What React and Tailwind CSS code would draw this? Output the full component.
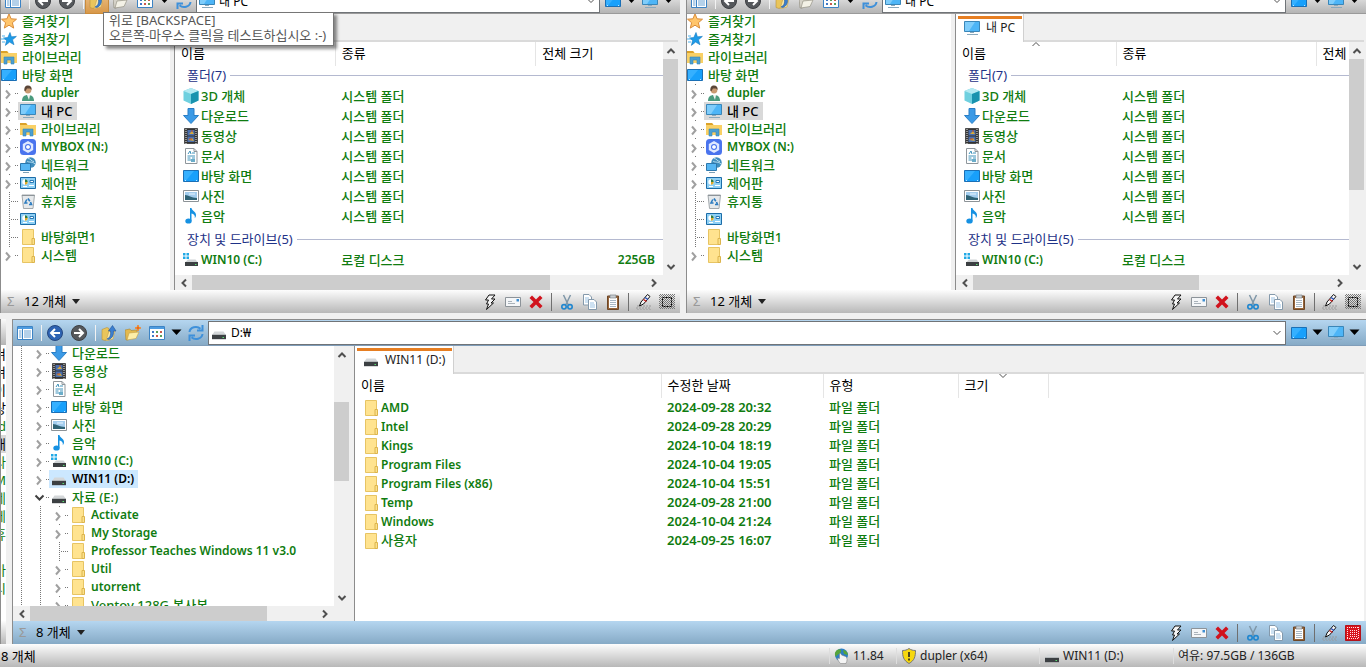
const FONT = "font-['Noto_Sans','Noto_Sans_CJK_KR',sans-serif]";

const TOP_TREE = [
  { icon: "star", label: "즐겨찾기", root: true },
  { icon: "bluestar", label: "즐겨찾기", root: true },
  { icon: "library", label: "라이브러리", root: true },
  { icon: "desktop", label: "바탕 화면", root: true },
  { icon: "user", label: "dupler", node: "closed" },
  { icon: "pc", label: "내 PC", node: "closed", selected: true },
  { icon: "library", label: "라이브러리", node: "closed" },
  { icon: "mybox", label: "MYBOX (N:)", node: "closed" },
  { icon: "network", label: "네트워크", node: "closed" },
  { icon: "control", label: "제어판", node: "closed" },
  { icon: "bin", label: "휴지통", node: "leaf" },
  { icon: "control", label: "", node: "leaf" },
  { icon: "folder", label: "바탕화면1", node: "leaf" },
  { icon: "folder", label: "시스템", node: "closed" },
];

const BOTTOM_TREE = [
  { icon: "download", label: "다운로드", node: "closed", depth: 1 },
  { icon: "video", label: "동영상", node: "closed", depth: 1 },
  { icon: "doc", label: "문서", node: "closed", depth: 1 },
  { icon: "desktop", label: "바탕 화면", node: "closed", depth: 1 },
  { icon: "photo", label: "사진", node: "closed", depth: 1 },
  { icon: "music", label: "음악", node: "closed", depth: 1 },
  { icon: "windrive", label: "WIN10 (C:)", node: "closed", depth: 1 },
  { icon: "drive", label: "WIN11 (D:)", node: "closed", depth: 1, selected: true },
  { icon: "drive", label: "자료 (E:)", node: "open", depth: 1 },
  { icon: "folder", label: "Activate", node: "closed", depth: 2 },
  { icon: "folder", label: "My Storage", node: "closed", depth: 2 },
  { icon: "folder", label: "Professor Teaches Windows 11 v3.0", node: "leaf", depth: 2 },
  { icon: "folder", label: "Util", node: "closed", depth: 2 },
  { icon: "folder", label: "utorrent", node: "closed", depth: 2 },
  { icon: "folder", label: "Ventoy 128G 복사본", node: "closed", depth: 2 },
];

const PC_GROUPS = [
  {
    title: "폴더(7)",
    rows: [
      { icon: "cube", name: "3D 개체", kind: "시스템 폴더" },
      { icon: "download", name: "다운로드", kind: "시스템 폴더" },
      { icon: "video", name: "동영상", kind: "시스템 폴더" },
      { icon: "doc", name: "문서", kind: "시스템 폴더" },
      { icon: "desktop", name: "바탕 화면", kind: "시스템 폴더" },
      { icon: "photo", name: "사진", kind: "시스템 폴더" },
      { icon: "music", name: "음악", kind: "시스템 폴더" },
    ],
  },
  {
    title: "장치 및 드라이브(5)",
    rows: [{ icon: "windrive", name: "WIN10 (C:)", kind: "로컬 디스크", size: "225GB" }],
  },
];

const D_ROWS = [
  { name: "AMD", date: "2024-09-28 20:32" },
  { name: "Intel", date: "2024-09-28 20:29" },
  { name: "Kings", date: "2024-10-04 18:19" },
  { name: "Program Files", date: "2024-10-04 19:05" },
  { name: "Program Files (x86)", date: "2024-10-04 15:51" },
  { name: "Temp", date: "2024-09-28 21:00" },
  { name: "Windows", date: "2024-10-04 21:24" },
  { name: "사용자", date: "2024-09-25 16:07" },
];

// slice of the window that sits behind the lower pane
const SLIVER = ["겨", "겨", "이", "탕", "d", "내", "라", "M", "네", "제", "휴", "", "바", "시"];

const ART = {
  star: (
    <path d="M8 .8l2.100 5 5.400.4-4.100 3.500 1.300 5.400L8 12.200l-4.700 2.900 1.300-5.400L.5 6.200l5.400-.4z" fill="#ffc56b" stroke="#d98c3a" />
  ),
  bluestar: (
    <>
      <path d="M9 1.500l1.400 4.300 5-.4-3.900 3.400 1.500 4.900-4.400-2.600-4.200 3.300 1.200-5L2.500 7l4.300-.5z" fill="#1e9be8" stroke="#1479c0" strokeWidth=".6" />
      <path d="M1 5h3M0 8h4M1 11h3" stroke="#4fb3ee" />
    </>
  ),
  library: (
    <>
      <path d="M0 2h6l1.500 2H16v10H0z" fill="#f9d065" />
      <path d="M0 2h6l1.500 2H0z" fill="#dba22a" />
      <path d="M3 15V8h10v7h-3v-4H6v4z" fill="#4b9fd0" stroke="#3787bb" strokeWidth=".6" />
    </>
  ),
  desktop: (
    <>
      <path d="M.5 2.500h15v11H.5z" fill="#18a0fb" stroke="#1a6fb5" />
      <path d="M1 3h10L3 12.500H1z" fill="#35b0ff" />
      <path d="M2 12.500h1M13 12.500h2" stroke="#bfe5ff" strokeDasharray="1 1" />
    </>
  ),
  user: (
    <>
      <path d="M2 16c0-4 2-6 6-6s6 2 6 6z" fill="#4b9b7e" />
      <path d="M7 10h3l-1 5z" fill="#f4f4f4" />
      <circle cx="8" cy="5" r="3.400" fill="#c99a72" />
      <path d="M4.500 6C4 2 5.500.5 8 .5S12 2 11.500 5L10 3.500H7L5.500 6z" fill="#5b4638" />
    </>
  ),
  pc: (
    <>
      <path d="M.5 1.500h15v10H.5z" fill="#4db5f7" stroke="#3a86b8" />
      <path d="M1 2h10L5 11H1z" fill="#7fcdfb" />
      <path d="M6 12.500h4M3 14.500h11" stroke="#8aa9bd" />
    </>
  ),
  mybox: (
    <>
      <rect width="16" height="16" rx="3.500" fill="#4a74ee" />
      <path d="M8 2l5.200 3v6L8 14l-5.200-3V5z" fill="#dfe9ff" />
      <circle cx="8" cy="8" r="3" fill="#4a74ee" />
      <path d="M8 6l1.800 1v2L8 10 6.200 9V7z" fill="#fff" />
    </>
  ),
  network: (
    <>
      <circle cx="10.500" cy="5.500" r="5.200" fill="#3f8dbd" />
      <path d="M8 1.500c3 0 3 3 6 3M7 4c2 2 5 0 8 3" stroke="#b9def0" fill="none" />
      <path d="M.5 6.500h10v7H.5z" fill="#56b6f3" stroke="#2d78ad" />
      <path d="M3 15.500h6" stroke="#7da0b5" />
    </>
  ),
  control: (
    <>
      <path d="M.5 2.500h15v11H.5z" fill="#8fd0f5" stroke="#1c6da8" />
      <circle cx="5" cy="7" r="2.700" fill="#fff" />
      <path d="M5 7V4.300A2.700 2.700 0 0 1 7.700 7z" fill="#2f7d45" />
      <path d="M5 7h2.700A2.700 2.700 0 0 1 5 9.700z" fill="#e0a828" />
      <path d="M10 5.500h3.500v2H10z" fill="#fff" stroke="#2878b5" />
      <path d="M3 11.500h4M9 10.500h5" stroke="#fff" />
    </>
  ),
  bin: (
    <>
      <path d="M2 2h12.500L13 15.500H3.500z" fill="#e6e9eb" stroke="#a2a8ac" />
      <path d="M2 2.500h12.500" stroke="#8d9499" />
      <path d="M8 5.500l1.800 2.800M6.800 6.500L5 10h2.500M9 11.500h2.500l-1-2.500" stroke="#2c7cc0" strokeWidth="1.600" fill="none" />
    </>
  ),
  folder: (
    <>
      <path d="M2.500.500H13.500v15H2.500z" fill="#ffe38f" stroke="#e7c463" />
      <path d="M12 9.500h2.500v6H12z" fill="#fbe08a" stroke="#dcb44c" />
    </>
  ),
  cube: (
    <>
      <path d="M8 0l7.500 3v9.500L8 16 .5 12.500V3z" fill="#6fd0df" />
      <path d="M8 0l7.500 3L8 6 .5 3z" fill="#b4eaf2" />
      <path d="M8 6l7.500-3v9.500L8 16z" fill="#1a93ae" />
    </>
  ),
  download: <path d="M5 .5h6v7h4.500L8 15.500.5 7.500H5z" fill="#3b9ae6" stroke="#2b7fc6" />,
  video: (
    <>
      <path d="M1.500.500h13v15h-13z" fill="#343434" stroke="#4c4c4c" />
      <path d="M3 1v15M13 1v15" stroke="#eee" strokeDasharray="1 1" />
      <path d="M4.500 2h7v5.500h-7zM4.500 8.500h7V14h-7z" fill="#4a6fae" />
      <path d="M6 6l3-3 2 3zM5 12l4-2 2 3z" fill="#d6a93d" />
      <path d="M8 3h2M6 11h3" stroke="#b8482f" />
    </>
  ),
  doc: (
    <>
      <path d="M2.500.500H11L14 3.500v12H2.500z" fill="#fff" stroke="#8f969b" />
      <path d="M11 .5v3h3" fill="none" stroke="#8f969b" />
      <path d="M5 6l2-3 1 3M9 5h3M4.500 8h7.500M4.500 10h3M9 10h3M4.500 12h7.500" stroke="#3f92ba" fill="none" />
      <path d="M8 11h4v3H8z" fill="#6badc9" />
    </>
  ),
  photo: (
    <>
      <path d="M.5 2.500h15v11H.5z" fill="#fff" stroke="#8d9397" />
      <path d="M2 4h12v8H2z" fill="#a3cdee" />
      <path d="M2 7c4 0 6 3 12 3v2H2z" fill="#2f6376" />
      <path d="M6 6h6" stroke="#e9f5ff" />
    </>
  ),
  music: (
    <>
      <path d="M7 0h1.500c.3 3 4.500 3.500 4.500 7 0 1.500-.6 2.500-1.200 3.200.5-3-1-4-3.300-4.700v7.300H7z" fill="#1691e2" />
      <ellipse cx="5.500" cy="13" rx="3.200" ry="2.600" fill="#1691e2" />
    </>
  ),
  drive: (
    <>
      <path d="M3.500 6.500h9l2.500 3.500H1z" fill="#d4d7d9" />
      <path d="M1 9.800h14v4.400H1z" fill="#3c4043" />
      <path d="M11.500 12.500h1.500" stroke="#58e070" />
    </>
  ),
  windrive: (
    <>
      <path d="M0 1h2.500v2.500H0zM3.500 1H6v2.500H3.500zM0 4.500h2.500V7H0zM3.500 4.500H6V7H3.500z" fill="#21a9e6" />
      <path d="M5 7.500h7.500L15 10.500H2z" fill="#cfd3d5" />
      <path d="M2 10h13v4H2z" fill="#3c4043" />
      <path d="M12 12.500h1.500" stroke="#58e070" />
    </>
  ),
  panel: (
    <>
      <path d="M.5 1.500h15v13H.5z" fill="#fff" stroke="#3c83c4" />
      <path d="M1 2h14v2H1z" fill="#4d9be0" />
      <path d="M5.500 4v10" stroke="#3c83c4" />
      <path d="M2 6h2.500M2 8h2.500M2 10h2.500M2 12h2.500M7 6h7M7 8h7M7 10h7M7 12h7" stroke="#6aa3d4" />
    </>
  ),
  back: (
    <>
      <circle cx="8" cy="8" r="7.500" fill="#2d63b3" stroke="#24477f" />
      <path d="M13 8H4M8 4L4 8l4 4" fill="none" stroke="#fff" strokeWidth="2" />
    </>
  ),
  backoff: (
    <>
      <circle cx="8" cy="8" r="7.500" fill="#55585c" stroke="#3d3f43" />
      <path d="M13 8H4M8 4L4 8l4 4" fill="none" stroke="#fff" strokeWidth="2" />
    </>
  ),
  forward: (
    <>
      <circle cx="8" cy="8" r="7.500" fill="#55585c" stroke="#3d3f43" />
      <path d="M3 8h9M8 4l4 4-4 4" fill="none" stroke="#fff" strokeWidth="2" />
    </>
  ),
  up: (
    <>
      <path d="M1 4.500l5-2 2 1v10l-4 2-3-1z" fill="#e9c55b" stroke="#b8923a" strokeWidth=".6" />
      <path d="M8 6l6 0-2 8-7 2z" fill="#fbe9a5" stroke="#c4a04a" strokeWidth=".6" />
      <path d="M6 14c3-1 4-4 3.500-8H7.500L11.500.5 15 6h-2.500c.4 4-1 7-4.500 8.500z" fill="#3b7fd0" stroke="#1f5497" strokeWidth=".6" />
    </>
  ),
  newfolder: (
    <>
      <path d="M0 5l5-1 1 1.500 6-.5v4L3 15H1z" fill="#e3b94e" stroke="#ab8631" strokeWidth=".6" />
      <path d="M4 8l10-1-3 6.500L2 15z" fill="#fdeea9" stroke="#c4a04a" strokeWidth=".6" />
      <path d="M13 0l.8 2.200L16 3l-2.200.8L13 6l-.8-2.200L10 3l2.200-.8z" fill="#e8590c" stroke="#f08c34" />
    </>
  ),
  newfolderoff: (
    <>
      <path d="M0 5l5-1 1 1.500 6-.5v4L3 15H1z" fill="#d5d2c8" stroke="#8a8778" strokeWidth=".6" />
      <path d="M4 8l10-1-3 6.500L2 15z" fill="#f3f1e6" stroke="#8a8778" strokeWidth=".6" />
    </>
  ),
  views: (
    <>
      <path d="M.5 1.500h15v13H.5z" fill="#fff" stroke="#3c83c4" />
      <path d="M1 2h14v2H1z" fill="#4d9be0" />
      <path d="M3 6h2v2H3zM3 10h2v2H3z" fill="#3f78c7" />
      <path d="M7 6h2v2H7zM11 10h2v2h-2z" fill="#58a05a" />
      <path d="M11 6h2v2h-2zM7 10h2v2H7z" fill="#cc5a4a" />
    </>
  ),
  refresh: (
    <path
      d="M1.500 7c.5-5 7.500-6.500 11-3.200M14.500 0v5.500H9M14.500 9c-.5 5-7.500 6.500-11 3.200M1.500 16v-5.500H7"
      fill="none"
      stroke="#3e90da"
      strokeWidth="2"
    />
  ),
  bolt: <path d="M7 1h6L9.500 5H13l-4 4h2.500L4.500 15.500 6.500 10H4.500l2-4H3.500z" fill="#f4f4f4" stroke="#111" />,
  mail: (
    <>
      <path d="M.5 3.500h15v9H.5z" fill="#f4f6f8" stroke="#8c9399" />
      <path d="M3 7.500h4M3 9.500h7" stroke="#a9b2ba" />
      <path d="M11.500 5h2.500v2.500h-2.500z" fill="#3f8fd2" />
    </>
  ),
  remove: <path d="M1.500 4L4 1.500l4 4 4-4L14.500 4l-4 4 4 4-2.500 2.500-4-4-4 4L1.500 12l4-4z" fill="#d1121c" />,
  cut: (
    <>
      <path d="M4.500 1l4.800 10M11.500 1L6.700 11" stroke="#7f97a8" strokeWidth="1.500" />
      <circle cx="5" cy="12.800" r="2.200" fill="none" stroke="#1f86cf" strokeWidth="1.600" />
      <circle cx="11" cy="12.800" r="2.200" fill="none" stroke="#1f86cf" strokeWidth="1.600" />
    </>
  ),
  copy: (
    <>
      <path d="M1.500.500H7L9.500 3v8h-8z" fill="#fff" stroke="#8499ab" />
      <path d="M6.500 5.500H12L14.500 8v7.500h-8z" fill="#fff" stroke="#8499ab" />
      <path d="M3 4h4M3 6h3M3 8h3M8 9h4M8 11h5M8 13h5" stroke="#9cc3e4" />
    </>
  ),
  paste: (
    <>
      <path d="M2.500 2h11v13.500h-11z" fill="#96643a" stroke="#6e4726" />
      <path d="M4 4h8v10H4z" fill="#fff" />
      <path d="M5 1h6v3H5z" fill="#c8cdd1" stroke="#70777c" strokeWidth=".6" />
      <path d="M5 6.500h6M5 8.500h6M5 10.500h6M5 12.500h6" stroke="#a9b8c4" />
    </>
  ),
  pen: (
    <>
      <path d="M1 12h15M0 14h15M1 16h15" stroke="#9a9a9a" strokeDasharray="2 1" />
      <path d="M3.500 12l1.500-4 6.500-7.500L14 2.500 7.500 10z" fill="#f7f7f7" stroke="#111" />
      <path d="M7.500 5.500l3 2" stroke="#c22" strokeWidth="1.500" />
      <path d="M9 3.500l3 2" stroke="#2a4fb8" strokeWidth="1.500" />
    </>
  ),
  grid: (
    <>
      <path
        d="M0 1.500h16M0 3.500h16M0 5.500h16M0 7.500h16M0 9.500h16M0 11.500h16M0 13.500h16M1 .5h15M1 2.500h15M1 4.500h15M1 6.500h15M1 8.500h15M1 10.500h15M1 12.500h15M1 14.500h15"
        stroke="#777"
        strokeDasharray="1 1"
      />
      <path d="M3.500 3.500h9v9h-9z" fill="none" stroke="#000" strokeDasharray="2 1" />
    </>
  ),
  gridon: (
    <>
      <path d="M.5.500h15v15H.5z" fill="#d8141c" stroke="#b3121a" />
      <path
        d="M2 2.500h12M2 13.500h12M2.500 2v12M13.500 2v12M5 5.500h7M5 7.500h7M5 9.500h7M5 11.500h7"
        stroke="#ffe5e5"
        strokeDasharray="1 1"
      />
    </>
  ),
  globe: (
    <>
      <circle cx="7.500" cy="7" r="6.500" fill="#2b7ec4" />
      <path d="M3 2c3-2 5 0 4 2S3 6 2 9C0 6 1 4 3 2zM9 2c3 0 5 3 5 5l-4-1z" fill="#57a43b" />
      <path d="M5.500 6c1-1 2 0 2 1l4 1.500c2 1 2 4 .5 7H6.500c-2-2-3-4-3-5.500l2 .5z" fill="#f4f4f4" stroke="#777" strokeWidth=".5" />
    </>
  ),
  shield: (
    <>
      <path d="M8 .5c2 1.500 4 2 6.500 2 0 6-1 10-6.500 13C2.500 12.500 1.500 8.500 1.500 2.500 4 2.500 6 2 8 .5z" fill="#f7d80e" stroke="#777" />
      <path d="M8 4v5M8 10.500v2" stroke="#222" strokeWidth="1.600" />
    </>
  ),
};

// names without any hangul are set a size smaller and a step bolder
function nameFace(text) {
  return /[가-힣]/.test(text) ? "text-[13px] font-medium" : "text-[12px] font-semibold";
}

function Icon({ name }) {
  return (
    <svg viewBox="0 0 16 16" className="h-4 w-4 shrink-0" aria-hidden="true">
      {ART[name]}
    </svg>
  );
}

function Caret() {
  return (
    <svg viewBox="0 0 11 7" className="h-[7px] w-[11px] shrink-0" aria-hidden="true">
      <path d="M.5.500h10L5.500 6z" fill="#000" />
    </svg>
  );
}

const CHEVRONS = {
  up: "M1.500 7L5 3.500 8.500 7",
  down: "M1.500 3L5 6.500 8.500 3",
  left: "M7 1.500L3.500 5 7 8.500",
  right: "M3 1.500L6.500 5 3 8.500",
};

function Chevron({ dir, thin }) {
  return (
    <svg viewBox="0 0 10 10" className="h-[10px] w-[10px] shrink-0" aria-hidden="true">
      <path d={CHEVRONS[dir]} fill="none" stroke="#505050" strokeWidth={thin ? 1 : 2} />
    </svg>
  );
}

/* ---------- toolbar ---------- */

function ToolButton({ icon, label, hot }) {
  return (
    <button
      type="button"
      aria-label={label}
      className={
        hot
          ? "flex h-[26px] w-6 items-center justify-center border border-[#c98b3c] bg-gradient-to-b from-[#f0c890] to-[#d89848]"
          : "flex h-[26px] w-6 items-center justify-center"
      }
    >
      <Icon name={icon} />
    </button>
  );
}

function Divider() {
  return <span className="ml-1 mr-px h-4 w-px shrink-0 bg-[#f2f2f2]" />;
}

function Toolbar({ icon, path, active, hot }) {
  return (
    <div
      className={
        active
          ? "flex h-[26px] shrink-0 items-center border-b border-[#7f9db9] bg-gradient-to-b from-[#b5d6f0] to-[#86aac6]"
          : "flex h-[26px] shrink-0 items-center border-b border-[#9a9a9a] bg-gradient-to-b from-[#fafafa] to-[#b4b4b4]"
      }
    >
      <div className="flex w-[195px] shrink-0 items-center">
        <ToolButton icon="panel" label="트리" />
        <Divider />
        <ToolButton icon={active ? "back" : "backoff"} label="뒤로" />
        <ToolButton icon="forward" label="앞으로" />
        <Divider />
        <ToolButton icon="up" label="위로" hot={hot} />
        <ToolButton icon={active ? "newfolder" : "newfolderoff"} label="새 폴더" />
        <ToolButton icon="views" label="보기" />
        <button type="button" aria-label="보기 선택" className="flex h-[26px] flex-1 items-center justify-center">
          <Caret />
        </button>
        <ToolButton icon="refresh" label="새로 고침" />
      </div>
      <div className="flex h-6 min-w-0 flex-1 items-center border border-[#707478] bg-white pl-[2px] pr-[3px]">
        <Icon name={icon} />
        <input
          aria-label="주소"
          defaultValue={path}
          className="h-5 min-w-0 flex-1 bg-transparent pl-1 text-[12px] text-black outline-none"
        />
        <button type="button" aria-label="주소 목록">
          <Chevron dir="down" thin />
        </button>
      </div>
      <div className="flex shrink-0 items-center gap-[5px] pl-[5px] pr-[6px]">
        <button type="button" aria-label="바탕 화면">
          <Icon name="desktop" />
        </button>
        <button type="button" aria-label="바탕 화면 목록">
          <Caret />
        </button>
        <button type="button" aria-label="내 PC">
          <Icon name="pc" />
        </button>
        <button type="button" aria-label="내 PC 목록">
          <Caret />
        </button>
      </div>
    </div>
  );
}

/* ---------- tree ---------- */

function Guide() {
  return (
    <svg viewBox="0 0 19 18" className="h-[18px] w-[19px] shrink-0" aria-hidden="true">
      <path d="M8.500 0v18" stroke="#777" strokeDasharray="1 1" />
    </svg>
  );
}

function Node({ state }) {
  return (
    <svg viewBox="0 0 17 18" className="h-[18px] w-[17px] shrink-0" aria-hidden="true">
      {state === "leaf" ? (
        <path d="M8.500 0v18M10 9.500h7" stroke="#777" strokeDasharray="1 1" />
      ) : (
        <path d="M8.500 0v1M14 9.500h3" stroke="#777" strokeDasharray="1 1" />
      )}
      {state === "closed" && <path d="M5 6.500l3.500 4-3.500 4" fill="none" stroke="#a0a0a0" strokeWidth="2" />}
      {state === "open" && <path d="M3.500 7.500l4 4 4-4" fill="none" stroke="#404040" strokeWidth="2" />}
    </svg>
  );
}

function TreeRow({ item, active }) {
  const tone = item.selected ? "text-black" : "text-[#107c10]";
  const fill = item.selected ? (active ? "bg-[#cce8ff]" : "bg-[#d9d9d9]") : "";
  return (
    <li className="flex h-[18px] items-center whitespace-nowrap">
      {Array.from({ length: item.depth || 0 }, (_, i) => (
        <Guide key={i} />
      ))}
      {!item.root && <Node state={item.node} />}
      <span
        className={`flex h-[18px] items-center gap-[5px] pr-1 leading-[18px] ${nameFace(item.label)} ${tone} ${fill} ${
          item.root ? "" : "pl-[2px]"
        }`}
      >
        <Icon name={item.icon} />
        {item.label}
      </span>
    </li>
  );
}

function Tree({ items, active }) {
  return (
    <div className="min-h-0 min-w-0 flex-1 overflow-hidden bg-white">
      <ul className="-mt-[2px]">
        {items.map((item, i) => (
          <TreeRow key={i} item={item} active={active} />
        ))}
      </ul>
    </div>
  );
}

/* ---------- scroll bars ---------- */

function VScroll({ thumb }) {
  return (
    <div className="flex w-[15px] shrink-0 flex-col items-center bg-[#f0f0f0]">
      <span className="flex h-[17px] items-center">
        <Chevron dir="up" />
      </span>
      <div className="min-h-0 w-full flex-1">
        <div className={`w-full bg-[#cdcdcd] ${thumb}`} />
      </div>
      <span className="flex h-[17px] items-center">
        <Chevron dir="down" />
      </span>
    </div>
  );
}

function HScroll({ thumb }) {
  return (
    <div className="flex h-[15px] shrink-0 items-center bg-[#f0f0f0] pr-4">
      <span className="flex w-[17px] justify-center">
        <Chevron dir="left" />
      </span>
      <div className="h-full flex-1">
        <div className={`h-full bg-[#cdcdcd] ${thumb}`} />
      </div>
      <span className="flex w-[17px] justify-center">
        <Chevron dir="right" />
      </span>
    </div>
  );
}

/* ---------- lists ---------- */

function TabStrip({ icon, label }) {
  return (
    <div className="flex h-7 shrink-0 border-b-2 border-[#dadada] bg-[#f0f0f0]">
      <button type="button" className="-mb-[2px] flex flex-col border-r border-[#d0d0d0] bg-white pl-[2px] pr-px pt-[2px]">
        <span className="h-[3px] w-full bg-[#e67e22]" />
        <span className="flex flex-1 items-center gap-[6px] pb-[6px] pl-[6px] pr-[7px] text-[12px] leading-4 text-[#222]">
          <Icon name={icon} />
          {label}
        </span>
      </button>
    </div>
  );
}

function HeadCell({ children, last, sorted }) {
  return (
    <th
      scope="col"
      className={
        last
          ? "relative h-6 overflow-hidden whitespace-nowrap pb-[2px] pl-[6px] text-left font-normal"
          : "relative h-6 overflow-hidden whitespace-nowrap border-r border-[#e5e5e5] pb-[2px] pl-[6px] text-left font-normal"
      }
    >
      {children}
      {sorted && (
        <span className="absolute inset-x-0 top-0 flex h-1 items-center justify-center">
          <Chevron dir={sorted} thin />
        </span>
      )}
    </th>
  );
}

function PcList({ sorted }) {
  return (
    <div className="min-w-0 flex-1 overflow-hidden bg-white pb-[5px]">
      <table className="w-0 min-w-full table-fixed border-collapse text-[13px] leading-5">
        <colgroup>
          <col className="w-[160px]" />
          <col className="w-[200px]" />
          <col className="w-[127px]" />
        </colgroup>
        <thead className="text-black">
          <tr>
            <HeadCell sorted={sorted}>이름</HeadCell>
            <HeadCell>종류</HeadCell>
            <HeadCell last>전체 크기</HeadCell>
          </tr>
        </thead>
        {PC_GROUPS.map((g, gi) => (
          <tbody key={g.title} className="font-medium text-[#107c10]">
            <tr>
              <th
                colSpan={3}
                scope="rowgroup"
                className={gi ? "h-6 pl-3 pt-[2px] font-normal" : "h-5 pb-[2px] pl-3 font-normal"}
              >
                <div className="flex items-center gap-1 leading-4 text-[#1e3287]">
                  {g.title}
                  <span className="h-px flex-1 bg-[#b4b9d0]" />
                </div>
              </th>
            </tr>
            {g.rows.map((r) => (
              <tr key={r.name}>
                <td className="h-5 pl-2">
                  <div className={`flex items-center gap-[2px] whitespace-nowrap leading-5 ${nameFace(r.name)}`}>
                    <Icon name={r.icon} />
                    {r.name}
                  </div>
                </td>
                <td className="h-5 whitespace-nowrap pl-[6px]">{r.kind}</td>
                <td className="h-5 whitespace-nowrap pr-2 text-right text-[12px] font-semibold leading-5">{r.size}</td>
              </tr>
            ))}
          </tbody>
        ))}
      </table>
    </div>
  );
}

function DriveList() {
  return (
    <div className="min-h-0 flex-1 overflow-hidden bg-white">
      <table className="table-fixed border-collapse text-[13px] leading-[19px]">
        <colgroup>
          <col className="w-[306px]" />
          <col className="w-[162px]" />
          <col className="w-[135px]" />
          <col className="w-[90px]" />
        </colgroup>
        <thead className="text-black">
          <tr>
            <HeadCell>이름</HeadCell>
            <HeadCell>수정한 날짜</HeadCell>
            <HeadCell>유형</HeadCell>
            <HeadCell sorted="down">크기</HeadCell>
          </tr>
        </thead>
        <tbody className="text-[#107c10]">
          {D_ROWS.map((r) => (
            <tr key={r.name}>
              <td className="h-[19px] pl-2">
                <div className={`flex items-center gap-[2px] whitespace-nowrap leading-[19px] ${nameFace(r.name)}`}>
                  <Icon name="folder" />
                  {r.name}
                </div>
              </td>
              <td className="h-[19px] whitespace-nowrap pl-[6px] font-semibold">{r.date}</td>
              <td className="h-[19px] whitespace-nowrap pl-[6px] font-medium">파일 폴더</td>
              <td />
            </tr>
          ))}
        </tbody>
      </table>
    </div>
  );
}

/* ---------- bars at the foot of each pane ---------- */

const ACTIONS = [
  ["bolt", "실행"],
  ["mail", "메일"],
  ["remove", "삭제"],
  null,
  ["cut", "잘라내기"],
  ["copy", "복사"],
  ["paste", "붙여넣기"],
  null,
  ["pen", "이름 바꾸기"],
];

function PaneStatus({ count, active }) {
  return (
    <div
      className={
        active
          ? "flex h-[23px] shrink-0 items-center justify-between bg-gradient-to-b from-[#b5d6f0] to-[#86aac6] pr-[5px]"
          : "flex h-[23px] shrink-0 items-center justify-between bg-gradient-to-b from-[#fdfdfd] to-[#b8b8b8] pr-[5px]"
      }
    >
      <button type="button" className="flex items-center pb-px pl-[6px] text-[13px] leading-4 text-black">
        <span className="w-[17px] text-left text-[#999]">Σ</span>
        {count}
        <svg viewBox="0 0 8 5" className="ml-[6px] h-[5px] w-2" aria-hidden="true">
          <path d="M0 0h8L4 5z" fill="#222" />
        </svg>
      </button>
      <div className="flex items-center gap-[7px]">
        {ACTIONS.map((a, i) =>
          a ? (
            <button key={i} type="button" aria-label={a[1]}>
              <Icon name={a[0]} />
            </button>
          ) : (
            <span key={i} className="h-[18px] w-px bg-[#6f6f6f]" />
          )
        )}
        <button type="button" aria-label="선택">
          <Icon name={active ? "gridon" : "grid"} />
        </button>
      </div>
    </div>
  );
}

function PcPane({ treeCol, hThumb, sorted, hot }) {
  return (
    <section className="relative flex min-w-0 flex-1 flex-col border-l border-[#8c8c8c]">
      <div className="flex h-[14px] flex-col justify-end overflow-hidden">
        <Toolbar icon="pc" path="내 PC" hot={hot} />
      </div>
      <div className="flex flex-1 bg-[#f0f0f0] pr-[2px]">
        <div className={`flex shrink-0 flex-col bg-white ${treeCol}`}>
          <Tree items={TOP_TREE} />
        </div>
        <div className="ml-1 flex min-w-0 flex-1 flex-col border-l border-[#8c8c8c]">
          <TabStrip icon="pc" label="내 PC" />
          <div className="flex flex-1">
            <PcList sorted={sorted} />
            <VScroll thumb="h-[66%]" />
          </div>
          <HScroll thumb={hThumb} />
        </div>
      </div>
      <PaneStatus count="12 개체" />
      {hot && (
        <div
          role="tooltip"
          className="absolute left-[102px] top-3 whitespace-nowrap border border-[#767676] bg-white pb-[2px] pl-[5px] pr-[7px] text-[13px] leading-[15px] text-[#575757] shadow-[3px_3px_3px_rgba(0,0,0,0.45)]"
        >
          위로 [BACKSPACE]
          <br />
          오른쪽-마우스 클릭을 테스트하십시오 :-)
        </div>
      )}
    </section>
  );
}

function DrivePane() {
  return (
    <section className="flex min-w-0 flex-1 flex-col border-l border-t border-[#8c8c8c]">
      <Toolbar icon="drive" path="D:₩" active />
      <div className="flex min-h-0 flex-1 bg-[#f0f0f0] pr-[2px]">
        <div className="flex w-[336px] shrink-0 flex-col bg-white">
          <div className="flex min-h-0 flex-1">
            <Tree items={BOTTOM_TREE} active />
            <VScroll thumb="mt-[39px] h-[79px]" />
          </div>
          <HScroll thumb="w-[83%]" />
        </div>
        <div className="ml-[5px] flex min-w-0 flex-1 flex-col border-l border-[#8c8c8c]">
          <TabStrip icon="drive" label="WIN11 (D:)" />
          <DriveList />
        </div>
      </div>
      <PaneStatus count="8 개체" active />
    </section>
  );
}

function BackWindow() {
  return (
    <div className="flex w-[6px] shrink-0 flex-col overflow-hidden border-l border-[#8c8c8c] bg-white">
      <div className="h-[26px] shrink-0 bg-gradient-to-b from-[#fafafa] to-[#b4b4b4]" />
      <div className="flex min-h-0 flex-1 flex-col overflow-hidden text-[13px] leading-[18px] text-[#107c10]">
        {SLIVER.map((s, i) => (
          <span
            key={i}
            className={
              i === 5
                ? "flex h-[18px] shrink-0 justify-end bg-[#d9d9d9] text-black"
                : i < 4
                  ? "flex h-[18px] shrink-0 justify-end text-black"
                  : "flex h-[18px] shrink-0 justify-end"
            }
          >
            {s}
          </span>
        ))}
      </div>
      <div className="h-[23px] shrink-0 bg-gradient-to-b from-[#fdfdfd] to-[#b8b8b8]" />
    </div>
  );
}

function StatusBar() {
  return (
    <footer className="flex h-[23px] shrink-0 items-center bg-gradient-to-b from-[#fdfdfd] to-[#b8b8b8] text-[12px] leading-4 text-[#222]">
      <span className="flex-1 pl-px text-[13px] text-black">8 개체</span>
      <span className="flex w-[67px] items-center gap-[3px] border-l border-[#ddd] pl-1">
        <Icon name="globe" />
        11.84
      </span>
      <span className="flex w-[143px] items-center gap-[3px] border-l border-[#ddd] pl-1">
        <Icon name="shield" />
        dupler (x64)
      </span>
      <span className="flex w-[134px] items-center gap-[3px] border-l border-[#ddd] pl-1">
        <Icon name="drive" />
        WIN11 (D:)
      </span>
      <span className="w-[193px] border-l border-[#ddd] pl-1">여유: 97.5GB / 136GB</span>
    </footer>
  );
}

export default function App() {
  return (
    <div className={`flex h-screen flex-col overflow-hidden bg-[#f0f0f0] ${FONT}`}>
      <div className="flex shrink-0 gap-[6px]">
        <PcPane treeCol="w-[169px]" hThumb="w-[79%]" hot />
        <PcPane treeCol="w-[264px]" hThumb="w-[63%]" sorted="up" />
      </div>
      <div className="mt-[6px] flex min-h-0 flex-1 gap-[6px]">
        <BackWindow />
        <DrivePane />
      </div>
      <StatusBar />
    </div>
  );
}
